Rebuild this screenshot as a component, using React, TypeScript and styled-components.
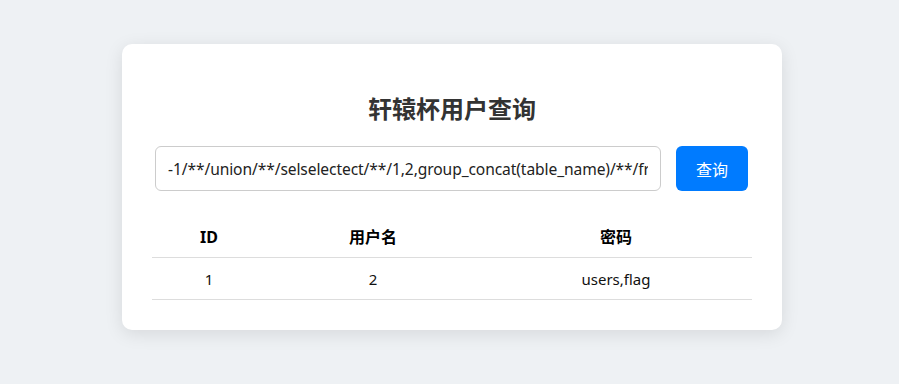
import React from "react";
import styled, { createGlobalStyle } from "styled-components";

const Global = createGlobalStyle`
  html, body { margin: 0; padding: 0; background: #eef1f4; }
  body { font-family: "Noto Sans", "Noto Sans CJK SC", sans-serif; }
`;

const Page = styled.div`
  padding: 44px 117px 40px 122px;
`;

const Card = styled.div`
  background: #fff;
  border-radius: 10px;
  box-shadow: 0 4px 18px rgba(0, 0, 0, 0.1);
  padding: 46px 30px 30px;
`;

const Title = styled.h2`
  margin: 0 0 20px;
  text-align: center;
  font-size: 24px;
  font-weight: 700;
  color: #333;
  line-height: 36px;
  font-family: "Noto Sans CJK SC", sans-serif;
`;

const Form = styled.form`
  display: flex;
  gap: 15px;
  padding: 0 4px 0 3px;
`;

const Input = styled.input`
  flex: 1;
  min-width: 0;
  height: 45px;
  box-sizing: border-box;
  border: 1px solid #ccc;
  border-radius: 6px;
  padding: 0 12px;
  font-size: 15.6px;
  letter-spacing: -0.1px;
  color: #222;
  font-family: "Noto Sans", sans-serif;
  outline: none;
`;

const Button = styled.button`
  width: 72px;
  height: 45px;
  border: none;
  border-radius: 6px;
  background: #007bff;
  color: #fff;
  font-size: 16px;
  font-family: "Noto Sans CJK SC", sans-serif;
`;

const Table = styled.table`
  width: 100%;
  margin-top: 26px;
  border-collapse: collapse;
  table-layout: fixed;
`;

const Th = styled.th<{ $w?: number }>`
  width: ${(p) => (p.$w ? `${p.$w}px` : "auto")};
  padding: 10px 8px;
  font-size: 16px;
  font-weight: 700;
  text-align: center;
  color: #000;
  border-bottom: 1px solid #ddd;
  line-height: 20px;
  font-family: "Noto Sans", "Noto Sans CJK SC", sans-serif;
`;

const Td = styled.td`
  padding: 11px 8px 10px;
  font-size: 15px;
  text-align: center;
  color: #111;
  border-bottom: 1px solid #ddd;
  line-height: 20px;
`;

export default function App() {
  return (
    <>
      <Global />
      <Page>
        <Card>
          <Title>轩辕杯用户查询</Title>
          <Form onSubmit={(e) => e.preventDefault()}>
            <Input
              defaultValue="-1/**/union/**/selselectect/**/1,2,group_concat(table_name)/**/from/**/infoorrmation_schema.tables/**/where/**/table_schema=database()"
            />
            <Button type="submit">查询</Button>
          </Form>
          <Table>
            <thead>
              <tr>
                <Th $w={98}>ID</Th>
                <Th $w={198}>用户名</Th>
                <Th>密码</Th>
              </tr>
            </thead>
            <tbody>
              <tr>
                <Td>1</Td>
                <Td>2</Td>
                <Td>users,flag</Td>
              </tr>
            </tbody>
          </Table>
        </Card>
      </Page>
    </>
  );
}
